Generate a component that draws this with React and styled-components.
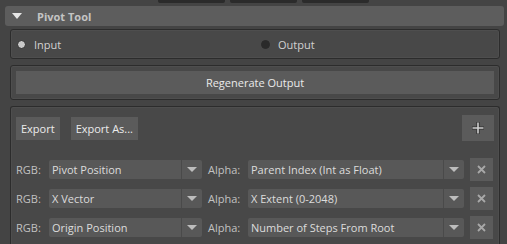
import React from 'react';
import styled, { createGlobalStyle } from 'styled-components';

const GlobalStyle = createGlobalStyle`
  html, body {
    margin: 0;
    padding: 0;
    background: #444444;
    font-family: "Open Sans", "Liberation Sans", sans-serif;
    font-size: 11px;
    color: #d2d2d2;
  }
`

const Page = styled.div`
  width: 507px;
  height: 244px;
  overflow: hidden;
  display: flex;
  flex-direction: column;
  > * {
    flex-shrink: 0;
  }
`

const TabStrip = styled.div`
  display: flex;
  gap: 5px;
  padding-left: 158px;
  height: 3px;
`

const Tab = styled.div`
  width: 67px;
  height: 3px;
  background: #2b2b2b;
  border-radius: 0 0 2px 2px;
`

const Header = styled.div`
  margin: 3px 3px 0 5px;
  height: 20px;
  background: #5d5d5d;
  border-radius: 3px;
  display: flex;
  align-items: center;
  padding-left: 7px;
  font-weight: bold;
  color: #c4c4c4;
  > span {
    margin-left: 15px;
  }
`

const Triangle = styled.div`
  width: 0;
  height: 0;
  border-left: 5px solid transparent;
  border-right: 5px solid transparent;
  border-top: 6px solid #e6e6e6;
`

const Body = styled.div`
  padding: 3px 7px 0 10px;
  display: flex;
  flex-direction: column;
  gap: 6px;
  > * {
    flex-shrink: 0;
  }
`

const Box = styled.div`
  background: #484848;
  border: 1px solid #2c2c2c;
  border-radius: 3px;
  box-shadow: inset 0 0 0 1px #4e4e4e;
`

const RadioBox = styled(Box)`
  height: 28px;
  display: grid;
  grid-template-columns: 1fr 1fr;
  align-items: center;
`

const RadioItem = styled.div`
  display: flex;
  align-items: center;
  padding-left: 6px;
  gap: 8px;
`

const Dot = styled.div`
  box-sizing: border-box;
  width: 9px;
  height: 9px;
  border-radius: 50%;
  background: ${p => p.on ? '#c8c8c8' : '#2a2a2a'};
  border: 1px solid #2a2a2a;
`

const RegenBox = styled(Box)`
  padding: 5px;
`

const WideButton = styled.div`
  height: 23px;
  background: #5b5b5b;
  display: flex;
  align-items: center;
  justify-content: center;
  color: #eaeaea;
`

const ListBox = styled(Box)`
  padding: 8px 5px 20px 5px;
  border-bottom: none;
  border-radius: 3px 3px 0 0;
`

const Toolbar = styled.div`
  display: flex;
  align-items: center;
  gap: 11px;
  margin-bottom: 19px;
`

const Button = styled.div`
  height: 23px;
  padding: 0 5px;
  background: #5b5b5b;
  display: flex;
  align-items: center;
  color: #ececec;
`

const IconButton = styled.div`
  width: ${p => p.w}px;
  height: ${p => p.h}px;
  margin-left: ${p => p.push ? 'auto' : '0'};
  background: #5b5b5b;
  display: flex;
  align-items: center;
  justify-content: center;
`

const Rows = styled.div`
  display: flex;
  flex-direction: column;
  gap: 10px;
`

const Row = styled.div`
  display: flex;
  align-items: center;
  height: 19px;
`

const Label = styled.div`
  width: ${p => p.w}px;
  color: #c2c2c2;
`

const Select = styled.div`
  width: ${p => p.w}px;
  height: 19px;
  display: flex;
  background: #585858;
  border-radius: 2px;
  margin-right: 6px;
  > span {
    flex: 1;
    padding-left: 3px;
    line-height: 19px;
    color: #dcdcdc;
    border-right: 1px solid #4a4a4a;
    white-space: nowrap;
  }
`

const Arrow = styled.div`
  width: 20px;
  display: flex;
  align-items: center;
  justify-content: center;
  &::after {
    content: '';
    border-left: 5px solid transparent;
    border-right: 5px solid transparent;
    border-top: 5px solid #bdbdbd;
  }
`

const rows = [
  ['Pivot Position', 'Parent Index (Int as Float)'],
  ['X Vector', 'X Extent (0-2048)'],
  ['Origin Position', 'Number of Steps From Root'],
]

const App = () => (
  <Page>
    <GlobalStyle />
    <TabStrip>
      <Tab /><Tab /><Tab />
    </TabStrip>
    <Header>
      <Triangle />
      <span>Pivot Tool</span>
    </Header>
    <Body>
      <RadioBox>
        <RadioItem><Dot on /><span>Input</span></RadioItem>
        <RadioItem><Dot /><span>Output</span></RadioItem>
      </RadioBox>
      <RegenBox>
        <WideButton>Regenerate Output</WideButton>
      </RegenBox>
      <ListBox>
        <Toolbar>
          <Button>Export</Button>
          <Button>Export As...</Button>
          <IconButton push w={32} h={26}>
            <svg width="14" height="14" viewBox="0 0 14 14">
              <path d="M7 1v12M1 7h12" stroke="#2e2e2e" strokeWidth="3.2" />
              <path d="M7 1.5v11M1.5 7h11" stroke="#d0d0d0" strokeWidth="1.6" />
            </svg>
          </IconButton>
        </Toolbar>
        <Rows>
          {rows.map(([rgb, alpha]) => (
            <Row key={rgb}>
              <Label w={33}>RGB:</Label>
              <Select w={153}><span>{rgb}</span><Arrow /></Select>
              <Label w={40}>Alpha:</Label>
              <Select w={216}><span>{alpha}</span><Arrow /></Select>
              <IconButton w={23} h={23}>
                <svg width="9" height="9" viewBox="0 0 9 9">
                  <path d="M1 1l7 7M8 1l-7 7" stroke="#a8a8a8" strokeWidth="1.8" />
                </svg>
              </IconButton>
            </Row>
          ))}
        </Rows>
      </ListBox>
    </Body>
  </Page>
)

export default App
